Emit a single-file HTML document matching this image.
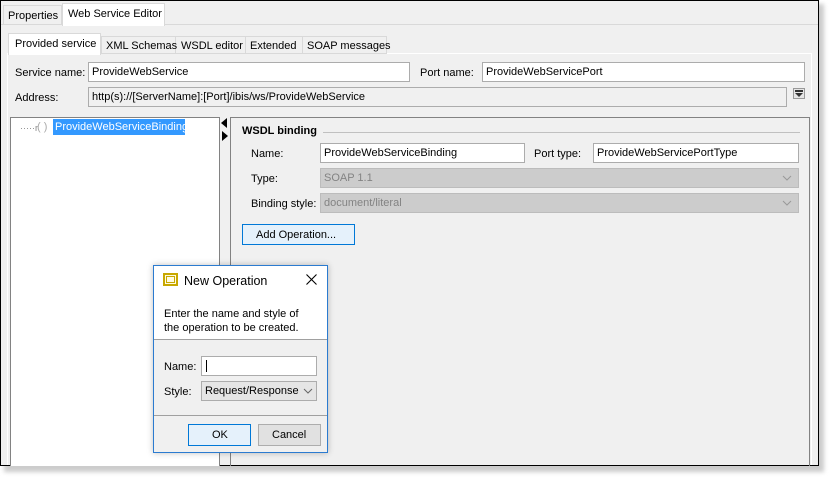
<!DOCTYPE html>
<html><head><style>
body{margin:0;width:837px;height:485px;background:#fff;font-family:"Liberation Sans",sans-serif;font-size:11px;color:#000;position:relative;overflow:hidden}
.a{position:absolute;box-sizing:border-box}
.t{position:absolute;white-space:nowrap;line-height:14px}
.in{position:absolute;box-sizing:border-box;background:#fff;border:1px solid #acacac;padding:3px 0 0 3px;line-height:13px;white-space:nowrap}
.dis{background:#ccc;border-color:#bcbcbc;color:#838383}
.chev{position:absolute;right:6px;top:6px}
</style></head><body>
<div class="a" style="left:4px;top:4px;width:820px;height:468px;background:#ccc;filter:blur(2px)"></div>
<div class="a" style="left:0;top:0;width:819px;height:466px;background:#f0f0f0;border:1px solid #000"></div>
<div class="a" style="left:1px;top:24px;width:817px;height:1px;background:#d9d9d9"></div>
<div class="a" style="left:3px;top:5px;width:59px;height:20px;border:1px solid #d9d9d9;border-bottom:none"></div>
<div class="t" style="left:8px;top:9px">Properties</div>
<div class="a" style="left:62px;top:3px;width:103px;height:23px;background:#fff;border:1px solid #d9d9d9;border-bottom:none"></div>
<div class="t" style="left:68px;top:7px">Web Service Editor</div>
<div class="a" style="left:7px;top:53px;width:805px;height:412px;border:1px solid #fff;border-bottom:none"></div>
<div class="a" style="left:101px;top:36px;width:286px;height:18px;background:#f0f0f0;border:1px solid #d9d9d9"></div>
<div class="a" style="left:175px;top:36px;width:1px;height:18px;background:#d9d9d9"></div>
<div class="a" style="left:245px;top:36px;width:1px;height:18px;background:#d9d9d9"></div>
<div class="a" style="left:302px;top:36px;width:1px;height:18px;background:#d9d9d9"></div>
<div class="t" style="left:106px;top:39px">XML Schemas</div>
<div class="t" style="left:181px;top:39px">WSDL editor</div>
<div class="t" style="left:250px;top:39px">Extended</div>
<div class="t" style="left:307px;top:39px">SOAP messages</div>
<div class="a" style="left:8px;top:33px;width:93px;height:22px;background:#fff;border:1px solid #d9d9d9;border-bottom:none"></div>
<div class="t" style="left:15px;top:37px">Provided service</div>
<div class="a" style="left:9px;top:55px;width:802px;height:410px;background:#f0f0f0"></div>
<div class="t" style="left:15px;top:66px">Service name:</div>
<div class="in" style="left:88px;top:62px;width:322px;height:20px">ProvideWebService</div>
<div class="t" style="left:420px;top:66px">Port name:</div>
<div class="in" style="left:482px;top:62px;width:323px;height:20px">ProvideWebServicePort</div>
<div class="t" style="left:15px;top:91px">Address:</div>
<div class="in" style="left:88px;top:87px;width:699px;height:20px;background:#f0f0f0">http(s)://[ServerName]:[Port]/ibis/ws/ProvideWebService</div>
<div class="a" style="left:793px;top:88px;width:12px;height:11px;border:1px solid #999;background:#e6e6e6"></div>
<div class="a" style="left:795px;top:90px;width:8px;height:2px;background:#333"></div>
<div class="a" style="left:795px;top:93px;width:0;height:0;border-left:4px solid transparent;border-right:4px solid transparent;border-top:4px solid #333"></div>
<div class="a" style="left:10px;top:117px;width:210px;height:349px;background:#fff;border:1px solid #828282;border-bottom:none"></div>
<div class="t" style="left:20px;top:121px;color:#888;font-size:9px">·····r</div>
<div class="t" style="left:37px;top:120px;color:#aaa">( )</div>
<div class="a" style="left:53px;top:119px;width:132px;height:16px;background:#3399ff"></div>
<div class="t" style="left:55px;top:120px;color:#fff">ProvideWebServiceBinding</div>
<div class="a" style="left:221px;top:118px;width:0;height:0;border-top:5px solid transparent;border-bottom:5px solid transparent;border-right:6px solid #000"></div>
<div class="a" style="left:222px;top:131px;width:0;height:0;border-top:5px solid transparent;border-bottom:5px solid transparent;border-left:6px solid #000"></div>
<div class="a" style="left:230px;top:117px;width:580px;height:349px;border:1px solid #828282;border-bottom:none"></div>
<div class="t" style="left:242px;top:124px;font-weight:bold">WSDL binding</div>
<div class="a" style="left:323px;top:132px;width:477px;height:1px;background:#c0c0c0"></div>
<div class="t" style="left:251px;top:147px">Name:</div>
<div class="in" style="left:320px;top:143px;width:205px;height:20px">ProvideWebServiceBinding</div>
<div class="t" style="left:534px;top:147px">Port type:</div>
<div class="in" style="left:593px;top:143px;width:206px;height:20px">ProvideWebServicePortType</div>
<div class="t" style="left:251px;top:172px">Type:</div>
<div class="in dis" style="left:320px;top:168px;width:479px;height:20px">SOAP 1.1<svg class="chev" width="10" height="6"><path d="M1 1L5 5L9 1" fill="none" stroke="#999"/></svg></div>
<div class="t" style="left:251px;top:197px">Binding style:</div>
<div class="in dis" style="left:320px;top:193px;width:479px;height:20px">document/literal<svg class="chev" width="10" height="6"><path d="M1 1L5 5L9 1" fill="none" stroke="#999"/></svg></div>
<div class="a" style="left:242px;top:224px;width:113px;height:21px;background:#e5f1fb;border:1px solid #0078d7"></div>
<div class="t" style="left:256px;top:228px">Add Operation...</div>
<div class="a" style="left:153px;top:265px;width:175px;height:188px;background:#f0f0f0;border:1px solid #2b7bd0;box-shadow:0 0 6px rgba(0,0,0,.25)"></div>
<div class="a" style="left:154px;top:266px;width:173px;height:73px;background:#fff"></div>
<div class="a" style="left:163px;top:273px;width:15px;height:13px;border:2px solid #c8a800;background:#fffbe0"></div>
<div class="a" style="left:166px;top:276px;width:9px;height:7px;border:1px solid #c8a800"></div>
<div class="t" style="left:184px;top:274px;font-size:12.5px">New Operation</div>
<svg class="a" style="left:306px;top:274px" width="11" height="11"><path d="M0.5 0.5L10.5 10.5M10.5 0.5L0.5 10.5" stroke="#000" stroke-width="1.1"/></svg>
<div class="t" style="left:164px;top:307px">Enter the name and style of</div>
<div class="t" style="left:164px;top:321px">the operation to be created.</div>
<div class="a" style="left:154px;top:339px;width:173px;height:1px;background:#a0a0a0"></div>
<div class="t" style="left:164px;top:360px">Name:</div>
<div class="in" style="left:201px;top:356px;width:116px;height:20px"><span style="display:inline-block;width:1px;height:12px;background:#000;margin-left:1px"></span></div>
<div class="t" style="left:164px;top:385px">Style:</div>
<div class="in" style="left:201px;top:381px;width:116px;height:20px;background:#e5e5e5">Request/Response<svg class="chev" style="right:3px" width="10" height="6"><path d="M1 1L5 5L9 1" fill="none" stroke="#666"/></svg></div>
<div class="a" style="left:154px;top:415px;width:173px;height:1px;background:#a0a0a0"></div>
<div class="a" style="left:188px;top:424px;width:63px;height:22px;background:#e5f1fb;border:1px solid #0078d7"></div>
<div class="t" style="left:212px;top:428px">OK</div>
<div class="a" style="left:258px;top:424px;width:63px;height:22px;background:#e1e1e1;border:1px solid #adadad"></div>
<div class="t" style="left:272px;top:428px">Cancel</div>
</body></html>
